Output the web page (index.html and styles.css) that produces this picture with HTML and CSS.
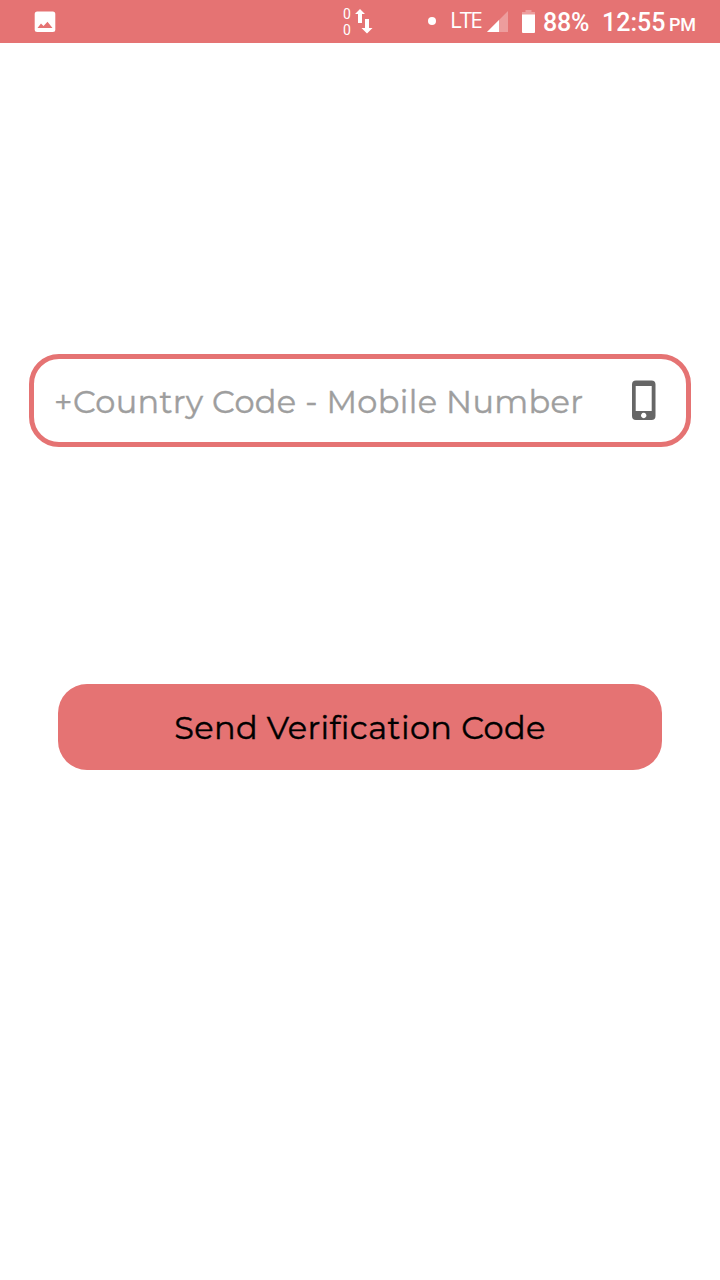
FILE: index.html
```html
<!DOCTYPE html>
<html lang="en">
<head>
<meta charset="utf-8">
<title>Phone Verification</title>
<link rel="stylesheet" href="styles.css">
</head>
<body>
<header class="status-bar">
  <svg class="picture-icon" width="22" height="22" viewBox="0 0 22 22"><rect x=".7" y=".5" width="20.6" height="20.6" rx="2.5" fill="#fff"/><path d="M3.500 17 7 12.500l2.500 2.500 4-4.200 5 6.200z" fill="#e57373"/></svg>
  <div class="traffic"><span>0</span><span>0</span></div>
  <svg class="arrows-icon" width="18" height="26" viewBox="0 0 18 26"><path d="M5 0l5 5H7V14H3V5H0zM10 10h4v9h3.500L12 24.500 6.500 19H10z" fill="#fff"/></svg>
  <span class="dot"></span>
  <span class="network">LTE</span>
  <svg class="signal-icon" width="21" height="21" viewBox="0 0 21 21"><path d="M21 0v21H0z" fill="#fff" opacity=".3"/><path d="M12 9v12H0z" fill="#fff"/></svg>
  <svg class="battery-icon" width="13" height="23" viewBox="0 0 13 23"><path d="M3.500 0h6v2H13v3H0V2h3.500z" fill="#fff" opacity=".3"/><path d="M0 4.500h13V22a1 1 0 0 1-1 1H1a1 1 0 0 1-1-1z" fill="#fff"/></svg>
  <span class="percent">88%</span>
  <span class="time">12:55</span>
  <span class="period">PM</span>
</header>
<main class="form">
  <label class="field">
    <input class="field-input" type="tel" placeholder="+Country Code - Mobile Number">
    <svg class="phone-icon" width="24" height="40" viewBox="0 0 24 40"><path fill-rule="evenodd" d="M4 .5h15.500a4 4 0 0 1 4 4v31.500a4 4 0 0 1-4 4H4a4 4 0 0 1-4-4V4.500a4 4 0 0 1 4-4zM3.700 6v25h16V6zM11.700 32.800a2.700 2.700 0 1 0 .01 0z" fill="#666"/></svg>
  </label>
  <button class="send-button" type="button">Send Verification Code</button>
</main>
</body>
</html>
```
FILE: styles.css
```css
* { box-sizing: border-box; }

body {
  margin: 0;
  min-height: 1280px;
  background: #fff;
  font-family: Montserrat, Inter, sans-serif;
}

.status-bar {
  display: flex;
  align-items: flex-start;
  height: 43px;
  padding-left: 34px;
  background: #e57373;
  color: #fff;
  font-family: Roboto, sans-serif;
  white-space: nowrap;
}

.status-bar > * { flex: none; }

.picture-icon { margin-top: 11px; }

.traffic {
  display: flex;
  flex-direction: column;
  width: 9px;
  margin: 6px 0 0 287px;
  font-size: 14px;
  line-height: 16px;
}

.arrows-icon { margin: 9px 0 0 3px; }

.dot {
  width: 8px;
  height: 8px;
  margin: 17px 0 0 55px;
  border-radius: 50%;
  background: #fff;
}

.network {
  width: 37px;
  margin: 6px 0 0 14px;
  font-family: "Open Sans", "Noto Sans", sans-serif;
  font-size: 22.5px;
  font-weight: 400;
  line-height: 28px;
  letter-spacing: -1.9px;
}

.signal-icon { margin-top: 11px; }

.battery-icon { margin: 10px 0 0 14px; }

.percent {
  width: 59px;
  margin: 7px 0 0 8px;
  font-size: 25px;
  font-weight: 500;
  line-height: 31px;
  letter-spacing: -0.2px;
}

.time {
  width: 67px;
  margin-top: 7px;
  font-size: 25px;
  font-weight: 500;
  line-height: 31px;
}

.period {
  margin-top: 10px;
  font-size: 18px;
  font-weight: 500;
  line-height: 29px;
  letter-spacing: -0.3px;
}

.form {
  display: flex;
  flex-direction: column;
  padding: 311px 29px 0;
}

.field {
  display: flex;
  align-items: center;
  height: 93px;
  padding: 0 30px 0 20px;
  border: 5px solid #e57373;
  border-radius: 30px;
}

.field-input {
  flex: 1;
  min-width: 0;
  height: 60px;
  padding: 2px 0 0;
  border: 0;
  outline: 0;
  background: transparent;
  font: 400 32px/40px Montserrat, Inter, sans-serif;
  letter-spacing: 0.33px;
}

.field-input::placeholder {
  color: #9e9e9e;
  opacity: 1;
  -webkit-text-stroke: 0.4px #9e9e9e;
}

.phone-icon { margin-bottom: 1px; }

.send-button {
  height: 86px;
  margin: 237px 29px 0;
  padding: 2px 0 0;
  border: 0;
  border-radius: 29px;
  background: #e57373;
  color: #000;
  font: 400 32px/40px Montserrat, Inter, sans-serif;
  letter-spacing: 0.4px;
  -webkit-text-stroke: 0.4px #000;
}
```
